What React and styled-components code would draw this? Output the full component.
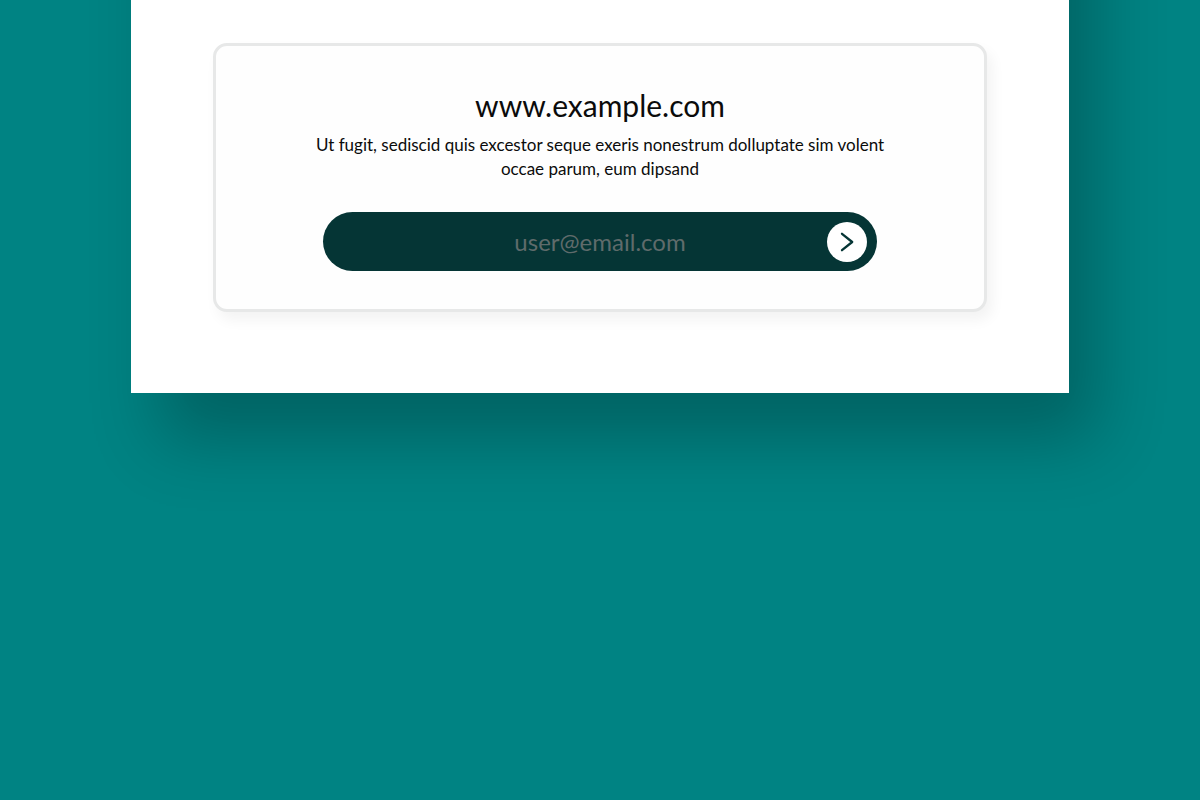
import styled, { createGlobalStyle } from "styled-components";

const GlobalStyle = createGlobalStyle`
  * {
    box-sizing: border-box;
  }

  body {
    margin: 0;
    background: #008383;
    color: #0b0b0b;
    font-family: Lato, "Open Sans", sans-serif;
  }
`;

const Page = styled.main`
  min-height: 100vh;
  overflow: hidden;
`;

// the sheet continues above the top of the page, so its shadow has no top end
const Sheet = styled.section`
  max-width: 938px;
  margin: -160px auto 0;
  padding: 203px 82px 81px;
  background: #ffffff;
  box-shadow: 28px 48px 64px rgba(0, 0, 0, 0.24);
`;

const Card = styled.div`
  display: flex;
  flex-direction: column;
  align-items: center;
  padding: 39px 40px 38px;
  border: 3px solid #e7e8e8;
  border-radius: 14px;
  background: #fefefe;
  box-shadow: 5px 8px 14px rgba(0, 0, 0, 0.05);
  text-align: center;
`;

const Title = styled.h1`
  margin: 0;
  font-size: 30px;
  font-weight: 400;
  line-height: 40px;
`;

const Description = styled.p`
  max-width: 584px;
  margin: 8px 0 31px;
  font-size: 17px;
  line-height: 24px;
`;

const SignupForm = styled.form`
  display: flex;
  align-items: center;
  width: 100%;
  max-width: 554px;
  min-height: 59px;
  padding: 0 10px;
  border-radius: 30px;
  background: #053535;
`;

const EmailInput = styled.input`
  flex: 1;
  min-width: 0;
  height: 40px;
  padding: 0 0 0 40px;
  border: 0;
  outline: 0;
  background: transparent;
  color: #ffffff;
  font-family: inherit;
  font-size: 24px;
  text-align: center;

  &::placeholder {
    color: #5f6b6b;
    opacity: 1;
  }
`;

const SubmitButton = styled.button`
  display: flex;
  align-items: center;
  justify-content: center;
  width: 40px;
  height: 40px;
  padding: 0;
  border: 0;
  border-radius: 50%;
  background: #ffffff;
  color: #053535;
  cursor: pointer;
`;

const ArrowIcon = () => (
  <svg width="40" height="40" viewBox="0 0 40 40" fill="none" aria-hidden="true">
    <path
      d="M15 11.8L25.2 20L15 28.2"
      stroke="currentColor"
      strokeWidth="2.3"
      strokeLinecap="round"
      strokeLinejoin="round"
    />
  </svg>
);

const App = () => {
  return (
    <Page>
      <GlobalStyle />
      <Sheet>
        <Card>
          <Title>www.example.com</Title>
          <Description>
            Ut fugit, sediscid quis excestor seque exeris nonestrum dolluptate
            sim volent occae parum, eum dipsand
          </Description>
          <SignupForm onSubmit={(e) => e.preventDefault()}>
            <EmailInput
              type="email"
              aria-label="Email"
              placeholder="user@email.com"
            />
            <SubmitButton type="submit" aria-label="Subscribe">
              <ArrowIcon />
            </SubmitButton>
          </SignupForm>
        </Card>
      </Sheet>
    </Page>
  );
};

export default App;
